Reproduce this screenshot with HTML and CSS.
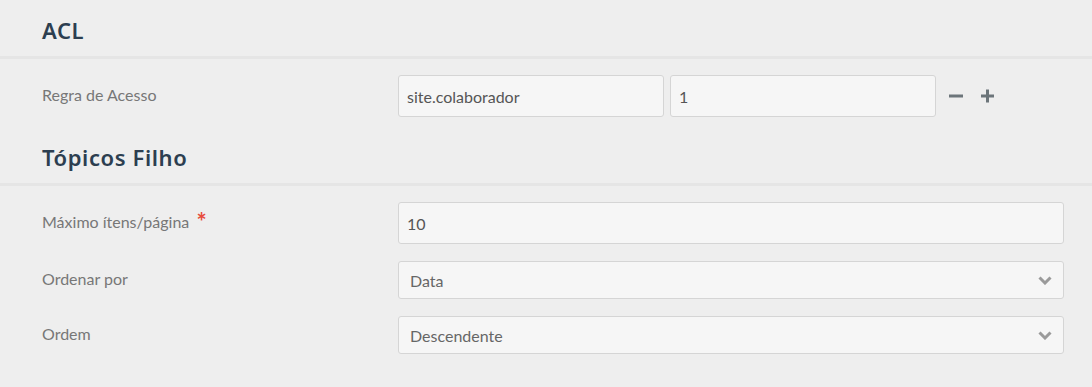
FILE: index.html
```html
<!DOCTYPE html>
<html lang="pt">
<head>
    <meta charset="UTF-8">
    <meta name="viewport" content="width=device-width, initial-scale=1.0">
    <title>Tópico</title>
    <link rel="stylesheet" href="styles.css">
</head>
<body>
    <section class="section">
        <h2 class="section-title">ACL</h2>
        <div class="field">
            <label class="field-label">Regra de Acesso</label>
            <div class="field-control acl">
                <input class="input" type="text" value="site.colaborador">
                <input class="input" type="text" value="1">
                <button class="icon-btn" type="button" title="Remover">
                    <svg width="14" height="14" viewBox="0 0 14 14"><path d="M0 7H14" stroke="currentColor" stroke-width="3"/></svg>
                </button>
                <button class="icon-btn" type="button" title="Adicionar">
                    <svg width="14" height="14" viewBox="0 0 14 14"><path d="M0 7H13M6.5 0.5V13.5" stroke="currentColor" stroke-width="3"/></svg>
                </button>
            </div>
        </div>
    </section>

    <section class="section">
        <h2 class="section-title">Tópicos Filho</h2>
        <div class="field">
            <label class="field-label">Máximo ítens/página <span class="required">*</span></label>
            <div class="field-control">
                <input class="input" type="text" value="10">
            </div>
        </div>
        <div class="field">
            <label class="field-label">Ordenar por</label>
            <div class="field-control">
                <div class="select">
                    <span>Data</span>
                    <svg class="chevron" width="14" height="9" viewBox="0 0 14 9"><path d="M1.5 1.5L7 7L12.5 1.5" fill="none" stroke="currentColor" stroke-width="3"/></svg>
                </div>
            </div>
        </div>
        <div class="field">
            <label class="field-label">Ordem</label>
            <div class="field-control">
                <div class="select">
                    <span>Descendente</span>
                    <svg class="chevron" width="14" height="9" viewBox="0 0 14 9"><path d="M1.5 1.5L7 7L12.5 1.5" fill="none" stroke="currentColor" stroke-width="3"/></svg>
                </div>
            </div>
        </div>
    </section>
</body>
</html>
```

FILE: styles.css
```css
body {
    margin: 0;
    background-color: #eeeeee;
    font-family: 'Lato', 'Liberation Sans', sans-serif;
    font-size: 16px;
    color: #777;
}
.section-title {
    margin: 0 0 16px;
    padding: 15px 0 11px 42px;
    line-height: 30px;
    font-family: 'Noto Sans', sans-serif;
    font-size: 22px;
    font-weight: 600;
    letter-spacing: 0.6px;
    color: #2c3e50;
    border-bottom: 3px solid #e5e5e5;
}
.field {
    display: flex;
    align-items: center;
    padding: 0 28px 0 42px;
    margin-bottom: 17px;
}
.field:last-child {
    margin-bottom: 10px;
}
.field-label {
    width: 356px;
    flex-shrink: 0;
    padding-bottom: 3px;
}
.required {
    color: #e74c3c;
    font-size: 24px;
    font-weight: bold;
    margin-left: 3px;
    vertical-align: -3px;
    line-height: 1;
}
.field-control {
    flex: 1;
    display: flex;
    align-items: center;
}
.input {
    box-sizing: border-box;
    width: 100%;
    height: 42px;
    padding: 0 8px;
    border: 1px solid #d5d5d5;
    border-radius: 3px;
    background-color: #f6f6f6;
    font-family: inherit;
    font-size: 16px;
    color: #555;
    outline: none;
}
.acl .input {
    width: 266px;
    margin-right: 6px;
}
.acl .input:nth-child(2) {
    margin-right: 7px;
}
.icon-btn {
    border: none;
    background: none;
    padding: 0 4px 0 6px;
    margin-right: 8px;
    color: #6c757a;
    display: flex;
    cursor: pointer;
}
.select {
    box-sizing: border-box;
    width: 100%;
    height: 38px;
    padding: 0 11px;
    border: 1px solid #d5d5d5;
    border-radius: 3px;
    background-color: #f6f6f6;
    display: flex;
    align-items: center;
    justify-content: space-between;
    color: #666;
}
.chevron {
    color: #9a9a9a;
}
```
